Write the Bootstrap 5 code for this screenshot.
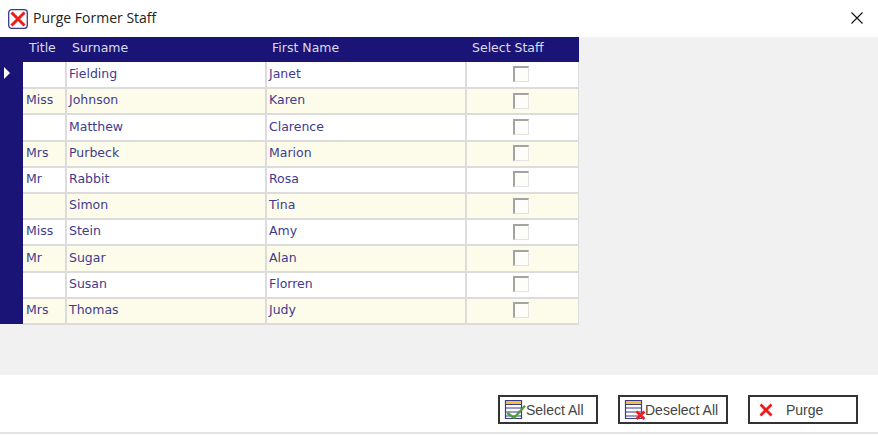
<!DOCTYPE html>
<html lang="en">
<head>
  <meta charset="UTF-8" />
  <title>Purge Former Staff</title>
  <link href="https://cdn.jsdelivr.net/npm/bootstrap@5.3.0/dist/css/bootstrap.min.css" rel="stylesheet">
  <style>
    html, body { height: 436px; overflow: hidden; }
    body { background: #fff; font-family: "DejaVu Sans", sans-serif; }
    .title-bar { height: 37px; padding: 0 15px 0 8px; }
    .title-text { font: 14px "Open Sans", sans-serif; color: #222; margin-left: 5px; margin-top: -2px; }
    .close-x { margin-top: -2px; }
    .main-area { height: 338px; background: #f1f1f1; }
    .staff-table { width: 579px; table-layout: fixed; border-collapse: collapse; margin: 0; font-size: 12.5px; color: #3f3b8f; }
    .staff-table th { height: 25px; padding: 0 0 2px 6px; background: #1b1477; color: #dcdce8; font-weight: 400; border: 0; vertical-align: middle; }
    .staff-table td { height: 26.2px; padding: 0 0 1px 2px; background: #fff; color: #3f3b8f; border: 0; border-right: 2px solid #dcdcdc; border-bottom: 2px solid #dcdcdc; vertical-align: middle; }
    .staff-table tr.alt td { background: #fdfbea; }
    .staff-table td.row-head { background: #1b1477 !important; border: 0; padding: 0; }
    .staff-table td.title-cell { padding-left: 3px; }
    .staff-table td.check-cell { border-right: 1px solid #dcdcdc; padding: 0 0 1px 0; }
    .col-rail { width: 23px; }
    .col-title { width: 43px; }
    .col-name { width: 200px; }
    .row-arrow { width: 0; height: 0; margin: -4px 0 0 4px; border-left: 6px solid #fff; border-top: 6px solid transparent; border-bottom: 6px solid transparent; }
    .grid-check { width: 16px; height: 16px; margin: 0 0 0 46px; background: #fdfdfa; border: 2px solid #a3a3a3; border-right: 1px solid #e2e2e2; border-bottom: 1px solid #e2e2e2; }
    .foot-bar { height: 57px; padding: 20px 20px 0 0; gap: 20px; }
    .foot-line { height: 2px; background: #e4e4e4; }
    .win-btn { height: 29px; padding: 0; background: #fff; border: 2px solid #333; border-radius: 0; font: 14px "Liberation Sans", sans-serif; color: #444; }
    .btn-select { width: 100px; }
    .btn-deselect { width: 110px; }
    .btn-purge { width: 110px; }
    .deselect-label { margin-left: -1px; }
    .purge-label { margin-left: 12px; }
  </style>
</head>
<body>

  <!-- Title bar -->
  <div class="title-bar d-flex align-items-center">
    <svg width="20" height="20" viewBox="0 0 20 20">
      <rect x=".7" y=".7" width="18.600" height="18.600" rx="3" fill="#fff" stroke="#3b3a8c" stroke-width="1.300"/>
      <path d="M3.500 3.500l13 13M16.500 3.500l-13 13" stroke="#f01c1c" stroke-width="3"/>
    </svg>
    <span class="title-text">Purge Former Staff</span>
    <svg class="ms-auto close-x" width="12" height="12" viewBox="0 0 12 12">
      <path d="M.5.5l11 11M11.500.5l-11 11" stroke="#111" stroke-width="1.100"/>
    </svg>
  </div>

  <!-- Grid -->
  <div class="main-area">
    <table class="staff-table">
      <colgroup>
        <col class="col-rail"><col class="col-title"><col class="col-name"><col class="col-name"><col>
      </colgroup>
      <thead>
        <tr>
          <th></th>
          <th>Title</th>
          <th>Surname</th>
          <th>First Name</th>
          <th>Select Staff</th>
        </tr>
      </thead>
      <tbody id="staffRows"></tbody>
    </table>
  </div>

  <!-- Buttons -->
  <div class="foot-bar d-flex justify-content-end">
    <button class="win-btn btn-select d-flex align-items-center ps-1" type="button">
      <svg width="22" height="23" viewBox="0 0 22 23">
        <path d="M1.500 2.500h16v18h-16z" fill="#fff" stroke="#3b3a8c" stroke-width="1.200"/>
        <path d="M1.500 2.500h16v4h-16z" fill="#f0c23c" stroke="#3b3a8c" stroke-width="1"/>
        <path d="M1.500 10h16M1.500 14h16M1.500 18h16" stroke="#3b3a8c" stroke-width="1.200"/>
        <path d="M3.300 15l6.700 5 11-12.300" fill="none" stroke="#4f9c3a" stroke-width="2.400"/>
      </svg>
      <span>Select All</span>
    </button>
    <button class="win-btn btn-deselect d-flex align-items-center ps-1" type="button">
      <svg width="22" height="23" viewBox="0 0 22 23">
        <path d="M1.500 2.500h16v18h-16z" fill="#fff" stroke="#3b3a8c" stroke-width="1.200"/>
        <path d="M1.500 2.500h16v4h-16z" fill="#f0c23c" stroke="#3b3a8c" stroke-width="1"/>
        <path d="M1.500 10h16M1.500 14h16M1.500 18h16" stroke="#3b3a8c" stroke-width="1.200"/>
        <path d="M12.500 13.500l8 7.500M20.500 13.500l-8 7.500" stroke="#f01c1c" stroke-width="2.600"/>
      </svg>
      <span class="deselect-label">Deselect All</span>
    </button>
    <button class="win-btn btn-purge d-flex align-items-center" type="button">
      <svg class="ms-2" width="16" height="16" viewBox="0 0 16 16">
        <path d="M2.500 2.500l11 11M13.500 2.500l-11 11" stroke="#f01c1c" stroke-width="2.800"/>
      </svg>
      <span class="purge-label">Purge</span>
    </button>
  </div>
  <div class="foot-line"></div>

  <script src="https://cdn.jsdelivr.net/npm/bootstrap@5.3.0/dist/js/bootstrap.bundle.min.js"></script>
  <script>
    const staff = [
      ['', 'Fielding', 'Janet'],
      ['Miss', 'Johnson', 'Karen'],
      ['', 'Matthew', 'Clarence'],
      ['Mrs', 'Purbeck', 'Marion'],
      ['Mr', 'Rabbit', 'Rosa'],
      ['', 'Simon', 'Tina'],
      ['Miss', 'Stein', 'Amy'],
      ['Mr', 'Sugar', 'Alan'],
      ['', 'Susan', 'Florren'],
      ['Mrs', 'Thomas', 'Judy']
    ];
    document.getElementById('staffRows').innerHTML = staff.map((s, i) => `
      <tr class="${i % 2 ? 'alt' : ''}">
        <td class="row-head">${i === 0 ? '<div class="row-arrow"></div>' : ''}</td>
        <td class="title-cell">${s[0]}</td><td>${s[1]}</td><td>${s[2]}</td>
        <td class="check-cell"><div class="grid-check"></div></td>
      </tr>`).join('');
  </script>
</body>
</html>
